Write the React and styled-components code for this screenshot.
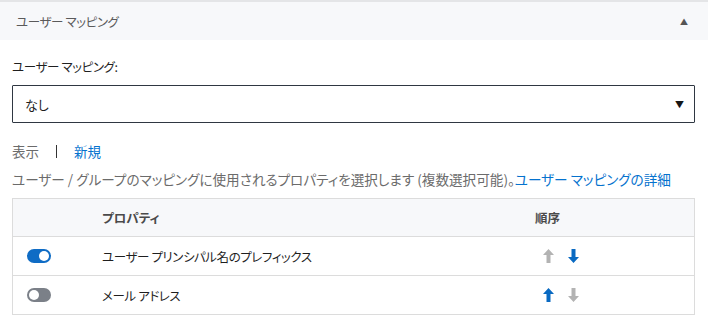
import React from "react";
import styled, { createGlobalStyle } from "styled-components";

const GlobalStyle = createGlobalStyle`
  body {
    margin: 0;
    background: #ffffff;
    font-family: "Noto Sans CJK JP", "Noto Sans", sans-serif;
    font-size: 12.5px;
    color: #222;
    font-feature-settings: "palt";
  }
`;

const rows = [
  { name: "ユーザー プリンシパル名のプレフィックス", on: true, up: false, down: true },
  { name: "メール アドレス", on: false, up: true, down: false },
];

const Arrow = ({ dir, active }) => (
  <svg width="11" height="14" viewBox="0 0 11 14">
    <path
      d="M5.5 0 L11 6 L7.5 6 L7.5 14 L3.5 14 L3.5 6 L0 6 Z"
      fill={active ? "#0a6ac2" : "#b3b3b3"}
      transform={dir === "down" ? "rotate(180 5.5 7)" : undefined}
    />
  </svg>
);

const App = () => {
  return (
    <Page>
      <GlobalStyle />
      <AccordionHeader>
        <HeaderTitle>ユーザー マッピング</HeaderTitle>
        <Caret>▲</Caret>
      </AccordionHeader>

      <Content>
        <FieldLabel>ユーザー マッピング:</FieldLabel>
        <SelectBox>
          <span>なし</span>
          <Caret dark>▼</Caret>
        </SelectBox>

        <LinkRow>
          <Muted>表示</Muted>
          <Divider />
          <Link>新規</Link>
        </LinkRow>

        <Description>
          ユーザー / グループのマッピングに使用されるプロパティを選択します (複数選択可能)。
          <Link>ユーザー マッピングの詳細</Link>
        </Description>

        <Table>
          <HeadRow>
            <Cell />
            <HeadCell>プロパティ</HeadCell>
            <HeadCell>順序</HeadCell>
          </HeadRow>
          {rows.map((row, index) => (
            <BodyRow key={index}>
              <Cell>
                <Toggle on={row.on}>
                  <Knob on={row.on} />
                </Toggle>
              </Cell>
              <Cell>{row.name}</Cell>
              <OrderCell>
                <Arrow dir="up" active={row.up} />
                <Arrow dir="down" active={row.down} />
              </OrderCell>
            </BodyRow>
          ))}
        </Table>
      </Content>
    </Page>
  );
};

const Page = styled.div`
  width: 708px;
  height: 331px;
  overflow: hidden;
`;

const AccordionHeader = styled.div`
  display: flex;
  align-items: center;
  justify-content: space-between;
  height: 38px;
  padding: 0 20px 0 16px;
  background: #f7f8fa;
  border-top: 2px solid #e4e5e7;
`;

const HeaderTitle = styled.span`
  color: #5a5a5a;
  letter-spacing: -0.4px;
`;

const Caret = styled.span`
  font-size: ${(p) => (p.dark ? "9px" : "8px")};
  color: ${(p) => (p.dark ? "#161616" : "#555")};
`;

const Content = styled.div`
  padding: 0 13px 0 12px;
`;

const FieldLabel = styled.div`
  margin-top: 18px;
  line-height: 18px;
  color: #1f1f1f;
  letter-spacing: -0.4px;
`;

const SelectBox = styled.div`
  display: flex;
  align-items: center;
  justify-content: space-between;
  box-sizing: border-box;
  height: 38px;
  margin-top: 9px;
  padding: 0 10px 0 12px;
  border: 1px solid #2f3742;
  border-radius: 1px;
  color: #1f1f1f;
  font-size: 13px;
`;

const LinkRow = styled.div`
  display: flex;
  align-items: center;
  margin-top: 19px;
  line-height: 18px;
  font-size: 13.5px;
`;

const Muted = styled.span`
  color: #6b6b6b;
`;

const Divider = styled.span`
  width: 1px;
  height: 13px;
  margin: 0 17px 0 17px;
  background: #333;
`;

const Link = styled.span`
  color: #0572ce;
`;

const Description = styled.div`
  margin-top: 10px;
  line-height: 18px;
  font-size: 13.6px;
  color: #6b6b6b;
  white-space: nowrap;
`;

const Table = styled.div`
  margin-top: 10px;
  border: 1px solid #dcdcdc;
`;

const HeadRow = styled.div`
  display: grid;
  grid-template-columns: 89px 1fr 159px;
  align-items: center;
  height: 37px;
  background: #f7f8fa;
`;

const BodyRow = styled(HeadRow)`
  height: 38px;
  background: #ffffff;
  border-top: 1px solid #dcdcdc;
`;

const Cell = styled.div`
  display: flex;
  align-items: center;
  color: #1f1f1f;
  letter-spacing: -0.4px;
`;

const HeadCell = styled(Cell)`
  font-weight: bold;
  color: #4a4a4a;
  font-size: 12.5px;
  letter-spacing: 0;
`;

const OrderCell = styled(Cell)`
  gap: 14px;
  padding-left: 8px;
`;

const Toggle = styled.div`
  position: relative;
  width: 24px;
  height: 14px;
  margin-left: 14px;
  border-radius: 7px;
  background: ${(p) => (p.on ? "#0f6cc5" : "#7b8088")};
`;

const Knob = styled.div`
  position: absolute;
  top: 2px;
  left: ${(p) => (p.on ? "12px" : "2px")};
  width: 10px;
  height: 10px;
  border-radius: 50%;
  background: #ffffff;
`;

export default App;
